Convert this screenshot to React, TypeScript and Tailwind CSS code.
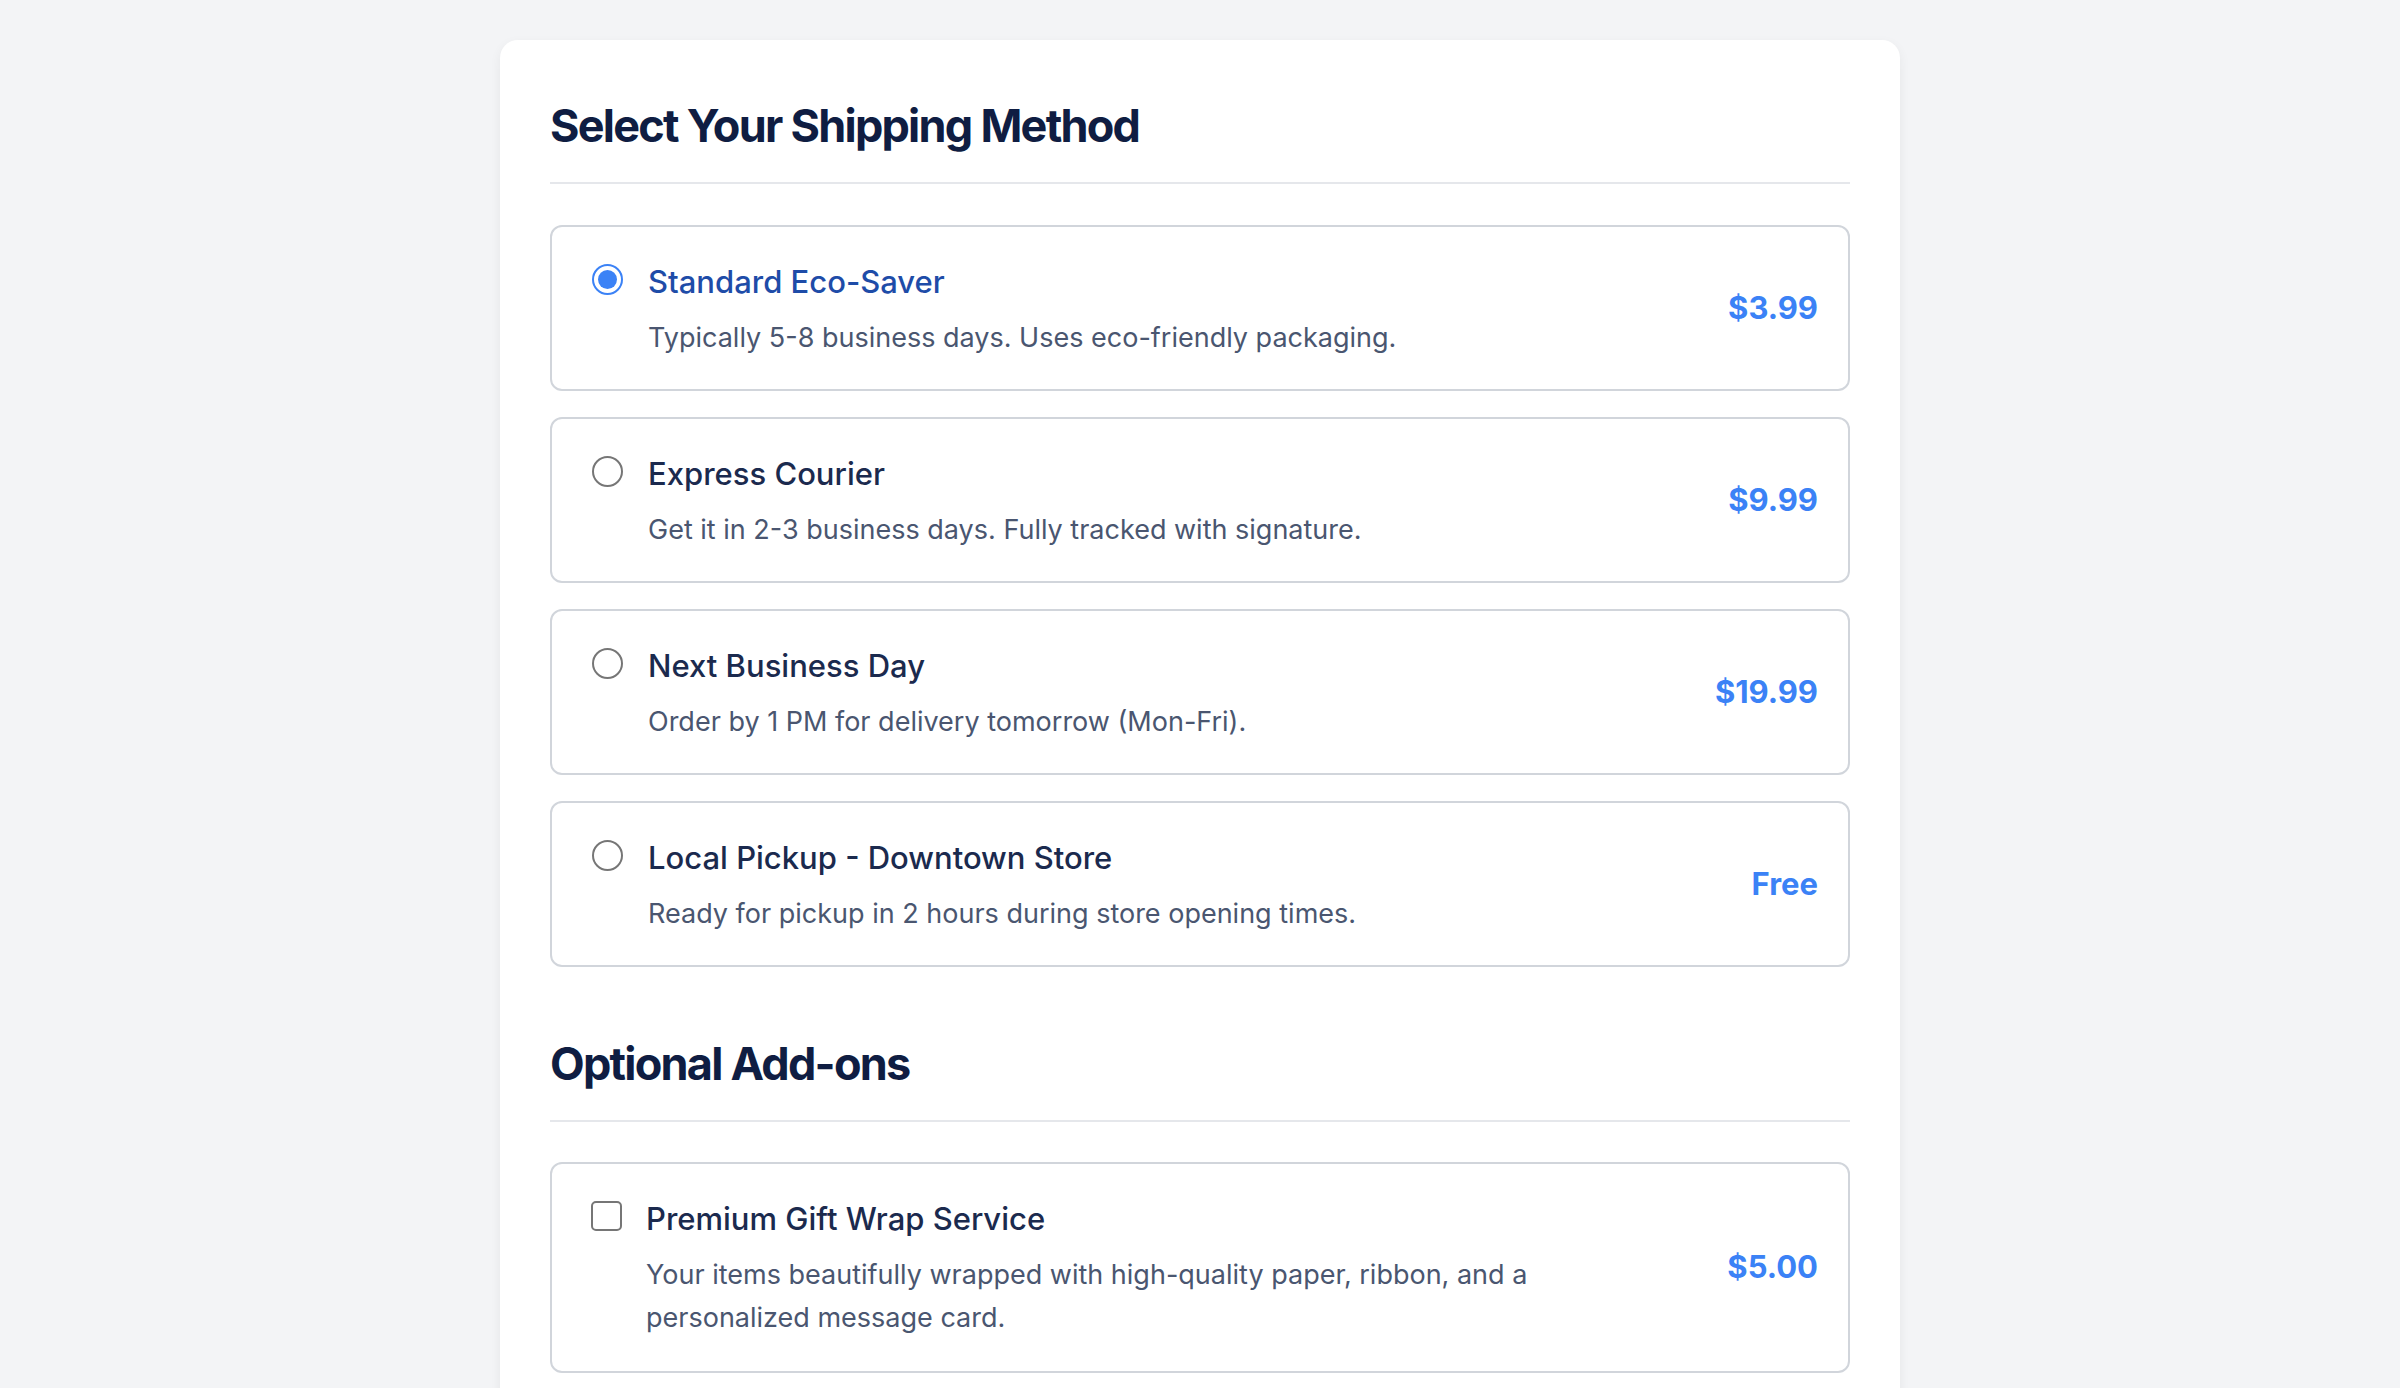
import React from "react";

type Opt = { title: string; desc: string; price: string; selected?: boolean };

const options: Opt[] = [
  { title: "Standard Eco-Saver", desc: "Typically 5-8 business days. Uses eco-friendly packaging.", price: "$3.99", selected: true },
  { title: "Express Courier", desc: "Get it in 2-3 business days. Fully tracked with signature.", price: "$9.99" },
  { title: "Next Business Day", desc: "Order by 1 PM for delivery tomorrow (Mon-Fri).", price: "$19.99" },
  { title: "Local Pickup - Downtown Store", desc: "Ready for pickup in 2 hours during store opening times.", price: "Free" },
];

function Radio({ checked }: { checked?: boolean }) {
  if (checked) {
    return (
      <span className="mt-[3px] flex h-[31px] w-[31px] shrink-0 items-center justify-center rounded-full border-2 border-[#3b82f6] bg-white">
        <span className="h-[19px] w-[19px] rounded-full bg-[#3b82f6]" />
      </span>
    );
  }
  return <span className="mt-[3px] block h-[31px] w-[31px] shrink-0 rounded-full border-2 border-[#767676] bg-white" />;
}

function SectionHeading({ children }: { children: React.ReactNode }) {
  return (
    <h2 className="border-b-2 border-[#e5e7eb] pb-[29px] text-[45px] font-bold leading-[54px] tracking-[-1.75px] text-[#0f1d42]">
      {children}
    </h2>
  );
}

export default function App() {
  return (
    <div className="min-h-screen bg-[#f3f4f6] pt-[40px] pb-[40px]" style={{ fontFamily: "Inter, 'Noto Sans', sans-serif" }}>
      <div className="mx-auto w-[1400px] rounded-[18px] bg-white px-[50px] pt-[59px] pb-[60px] shadow-[0_4px_12px_rgba(0,0,0,0.06)]">
        <SectionHeading>Select Your Shipping Method</SectionHeading>
        <div className="mt-[41px] flex flex-col gap-[26px]">
          {options.map((o) => (
            <label key={o.title} className="flex items-center rounded-[12px] border-2 border-[#d1d5db] bg-white pl-[40px] pr-[30px]">
              <div className="flex flex-1 items-start pt-[34px] pb-[30px]">
                <Radio checked={o.selected} />
                <div className="ml-[25px]">
                  <div className={`text-[31px] font-medium leading-[42px] ${o.selected ? "text-[#1e4ca8]" : "text-[#1b2a4e]"}`}>{o.title}</div>
                  <div className="mt-[13px] text-[27px] leading-[43px] text-[#4a5670]">{o.desc}</div>
                </div>
              </div>
              <div className="shrink-0 text-[31px] font-bold text-[#3b82f6]">{o.price}</div>
            </label>
          ))}
        </div>

        <div className="mt-[70px]">
          <SectionHeading>Optional Add-ons</SectionHeading>
        </div>
        <div className="mt-[40px] flex flex-col gap-[26px]">
          <label className="flex items-center rounded-[12px] border-2 border-[#d1d5db] bg-white pl-[39px] pr-[30px]">
            <div className="flex flex-1 items-start pt-[34px] pb-[32px]">
              <span className="mt-[3px] block h-[30px] w-[31px] shrink-0 rounded-[5px] border-2 border-[#767676] bg-white" />
              <div className="ml-[24px] max-w-[1000px]">
                <div className="text-[31px] font-medium leading-[42px] text-[#1b2a4e]">Premium Gift Wrap Service</div>
                <div className="mt-[13px] text-[27px] leading-[43px] text-[#4a5670]">
                  Your items beautifully wrapped with high-quality paper, ribbon, and a personalized message card.
                </div>
              </div>
            </div>
            <div className="shrink-0 text-[31px] font-bold text-[#3b82f6]">$5.00</div>
          </label>
        </div>
      </div>
    </div>
  );
}
